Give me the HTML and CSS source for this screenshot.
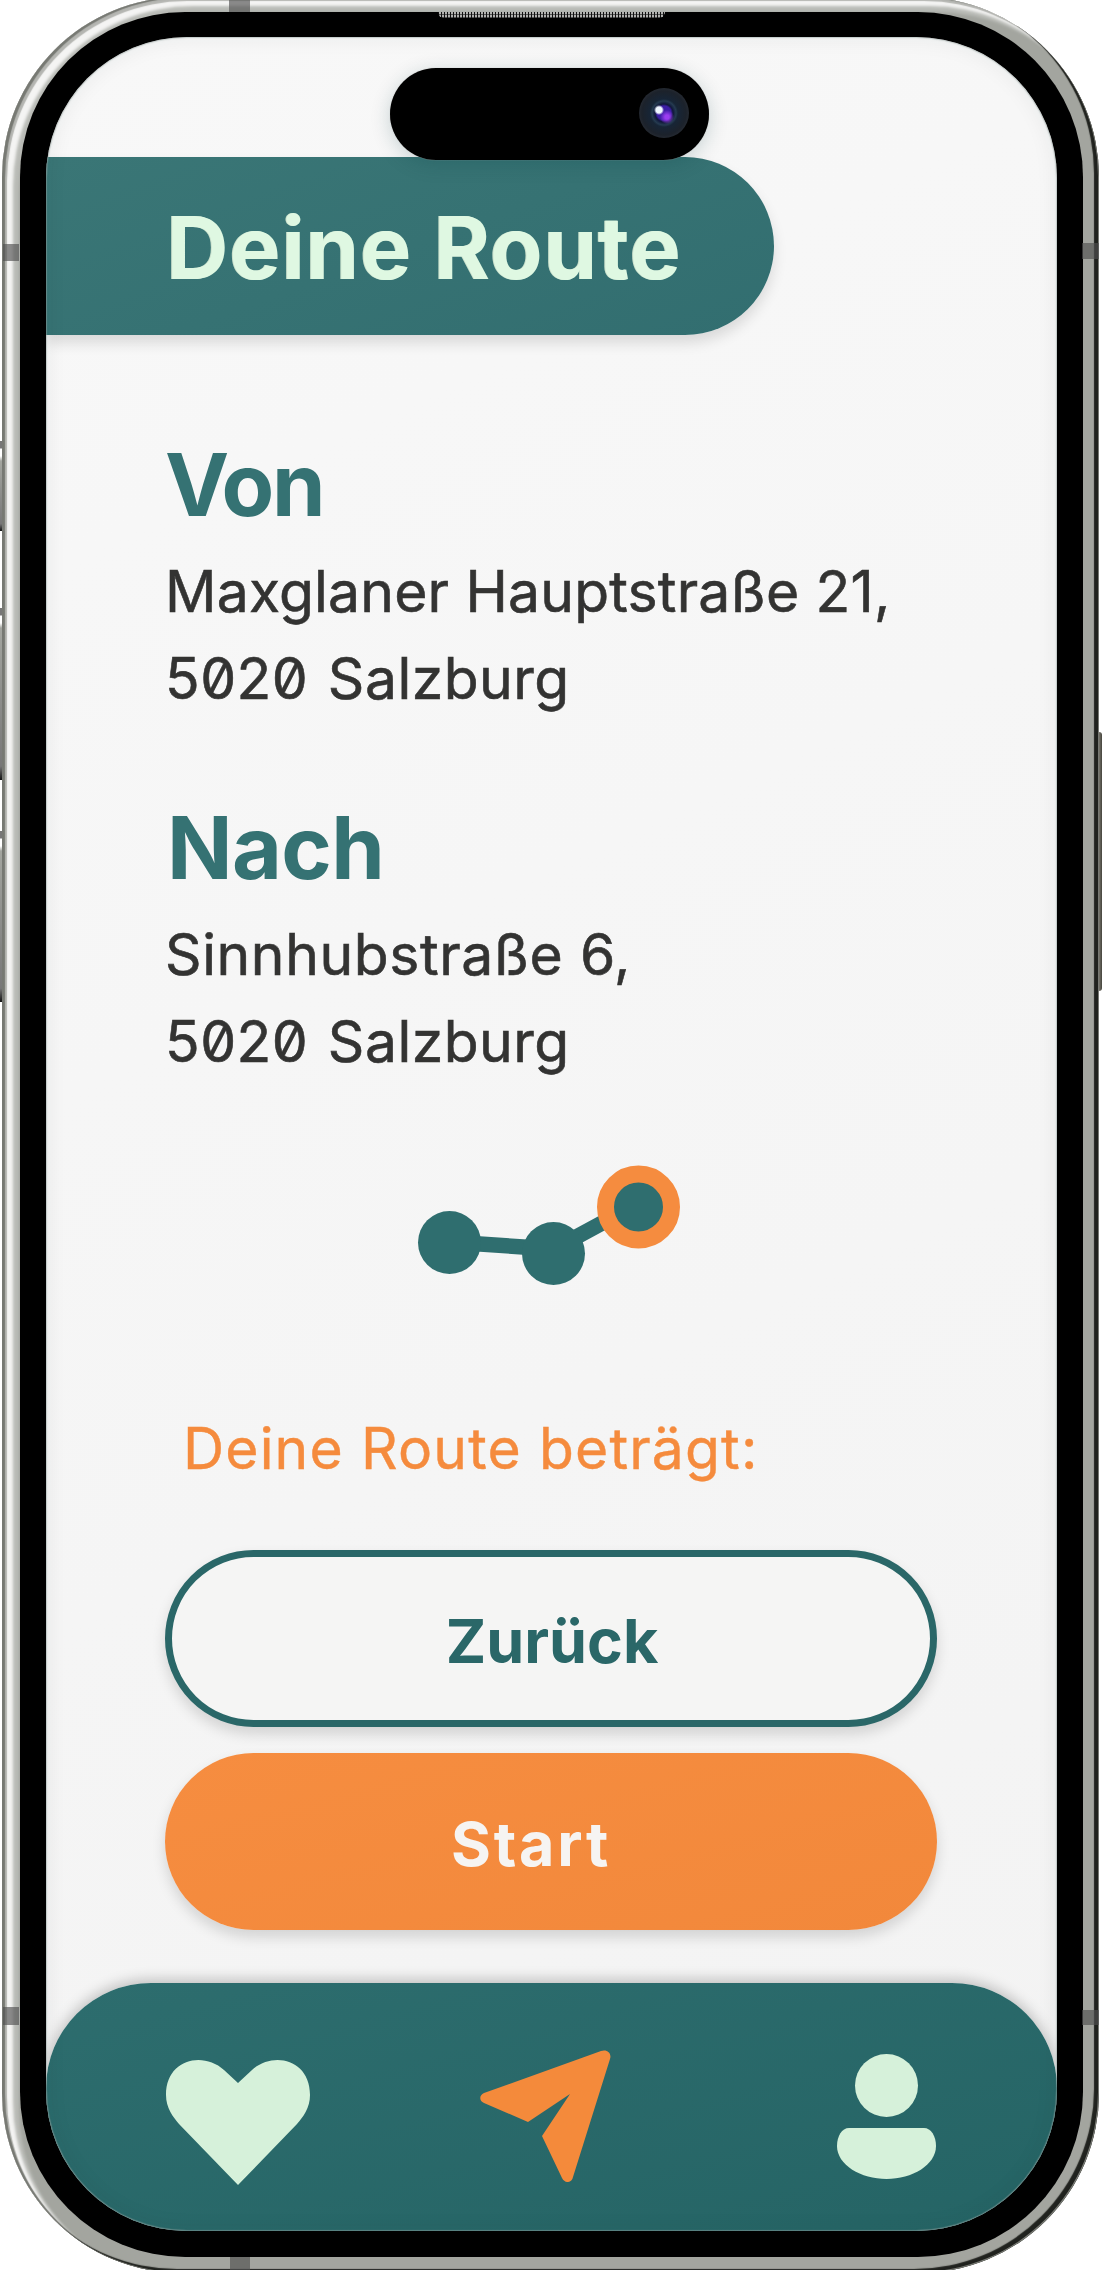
FILE: index.html
```html
<!DOCTYPE html>
<html lang="de">
<head>
<meta charset="utf-8">
<title>Deine Route</title>
<link rel="stylesheet" href="styles.css">
</head>
<body>
<div class="device">
  <span class="key key-action"></span>
  <span class="key key-up"></span>
  <span class="key key-down"></span>
  <span class="key key-power"></span>
  <div class="frame">
    <div class="bezel">
      <main class="screen">
        <header class="title-bar"><h1>Deine Route</h1></header>
        <div class="content">
          <section class="stop">
            <h2 class="von">Von</h2>
            <p><span class="street-from">Maxglaner Hauptstraße 21,</span><br><span class="city">5020 Salzburg</span></p>
          </section>
          <section class="stop">
            <h2 class="nach">Nach</h2>
            <p><span class="street-to">Sinnhubstraße 6,</span><br><span class="city">5020 Salzburg</span></p>
          </section>
          <svg class="route" viewBox="0 0 264 122" aria-hidden="true">
            <path d="M32 77 136 84 221 38" fill="none" stroke="#2f6e6f" stroke-width="15.500"/>
            <circle cx="31.500" cy="77.500" r="31.500" fill="#2f6e6f"/>
            <circle cx="135.500" cy="88.500" r="31.500" fill="#2f6e6f"/>
            <circle cx="220.500" cy="42" r="33" fill="#2f6e6f" stroke="#f58c3f" stroke-width="17"/>
          </svg>
          <p class="length">Deine Route beträgt:</p>
          <div class="actions">
            <button class="btn btn-outline"><span>Zurück</span></button>
            <button class="btn btn-solid"><span>Start</span></button>
          </div>
        </div>
        <nav class="tabs">
          <svg class="icon-heart" viewBox="0 0 144 126"><path d="M72 24 58 11C37-8 0 0 0 36c0 13 7 22 13 29l59 61 59-61c6-7 13-16 13-29 0-36-37-44-58-25Z" fill="#d6f1da"/></svg>
          <svg class="icon-send" viewBox="0 0 131 132"><path d="M121 1c6-2 11 2 9 8L93 127c-1 6-8 7-11 1L62 86 90 44 48 72 4 53c-5-2-5-8 0-10Z" fill="#f48a3b"/></svg>
          <svg class="icon-user" viewBox="0 0 99 125"><circle cx="49.500" cy="31.500" r="31.500" fill="#d6f1da"/><path d="M12 74h75c7 0 12 8 12 18 0 19-24 33-49.500 33S0 111 0 92c0-10 5-18 12-18Z" fill="#d6f1da"/></svg>
        </nav>
        <div class="glass"></div>
        <div class="island"><span class="camera"></span></div>
      </main>
      <span class="speaker"></span>
    </div>
    <span class="band band-top"></span>
    <span class="band band-bottom"></span>
    <span class="band band-left-top"></span>
    <span class="band band-right-top"></span>
    <span class="band band-left-bottom"></span>
    <span class="band band-right-bottom"></span>
  </div>
</div>
</body>
</html>
```
FILE: styles.css
```css
* { box-sizing: border-box; }
body { margin: 0; background: #fff; font-family: Inter, "Noto Sans", sans-serif; }
h1, h2, p { margin: 0; }
.device { position: relative; width: 1102px; height: 2270px; overflow: hidden; }

/* Metal frame and bezel */
.frame {
  position: relative;
  width: 1097px;
  height: 2276px;
  margin: -3px 0 0 2px;
  padding: 15px 16.500px 16px 17.500px;
  border-radius: 180px;
  background: #a3a59f;
  box-shadow:
    inset -1px -1px 0 #777973,
    inset -5px -4px 1px #20221e,
    inset 3px 1px 1px #777973,
    inset 5px 4px 1px #b5b6b2,
    inset 11px 9px 3px #f4f4f3,
    inset 17px 15px 3px #b9bbb6;
}
.bezel {
  position: relative;
  height: 2245px;
  padding: 25px 25.500px 26px 26px;
  border-radius: 165px;
  background: #000;
}
.screen {
  position: relative;
  display: flex;
  flex-direction: column;
  height: 2194px;
  border-radius: 141px;
  overflow: hidden;
  background: linear-gradient(155deg, #f8f8f8, #f3f3f3);
}
.glass {
  position: absolute;
  inset: 0;
  border-radius: 141px;
  box-shadow: inset 0 0 1px 1px rgba(150, 165, 162, .5), inset 0 0 22px rgba(0, 45, 45, .07);
  pointer-events: none;
}
.speaker {
  position: absolute;
  top: 0;
  left: 418px;
  width: 227px;
  height: 6px;
  border-radius: 0 0 10px 10px;
  background: repeating-linear-gradient(90deg, #111 0 1px, transparent 1px 3px), repeating-linear-gradient(0deg, #555 0 1px, #b2b2b0 1px 3px);
}
.key { position: absolute; left: 0; width: 2px; background: linear-gradient(#777 0 7px, #fff 8px 15px, #a3a59f 20px, #777 92%, #111); }
.key-action { top: 433px; height: 74px; }
.key-action { top: 441px; height: 90px; }
.key-up { top: 608px; height: 172px; }
.key-down { top: 831px; height: 171px; }
.key-power { left: 1098px; top: 732px; width: 4px; height: 259px; border-radius: 0 3px 3px 0; background: linear-gradient(90deg, #89877e, #45443c); }
.band { position: absolute; background: rgba(80, 80, 80, .65); }
.band-top { left: 227px; top: 3px; width: 21px; height: 12px; }
.band-bottom { left: 228px; bottom: 3px; width: 20px; height: 13px; }
.band-left-top { left: 1px; top: 247px; width: 16px; height: 17px; }
.band-right-top { right: 0; top: 246px; width: 17px; height: 16px; }
.band-left-bottom { left: 1px; top: 2010px; width: 16px; height: 18px; }
.band-right-bottom { right: 0; top: 2013px; width: 17px; height: 15px; }
.island {
  position: absolute;
  top: 31px;
  left: 344.500px;
  display: flex;
  align-items: center;
  justify-content: flex-end;
  width: 319px;
  height: 92px;
  padding: 0 20px 2px 0;
  border-radius: 46px;
  background: #000;
  box-shadow: 0 0 1px #aaa, 0 4px 20px rgba(0, 60, 65, .2);
}
.camera {
  width: 50px;
  height: 50px;
  border-radius: 50%;
  background:
    radial-gradient(circle at 20px 22px, #eef6ff 0 3px, transparent 5px),
    radial-gradient(circle at 28px 29px, #9a3df0 0 2px, transparent 7px),
    radial-gradient(circle, #3c1da5 0 7px, #10173a 9px, #253b50 12px, #172536 14px, #1c222b 22px, #242931 25px);
}

/* Page */
.title-bar {
  width: 728px;
  height: 178px;
  margin-top: 120px;
  padding-left: 121px;
  border-radius: 0 89px 89px 0;
  background: linear-gradient(160deg, #3a7676, #326e70);
  box-shadow: 0 8px 14px rgba(0, 0, 0, .12);
}
h1 {
  font-size: 86px;
  font-weight: 700;
  line-height: 182px;
  letter-spacing: .9px;
  color: #dff8e2;
  text-shadow: -1px 0 0 #c9dfcb;
  white-space: nowrap;
}
.content { display: flex; flex-direction: column; padding: 100px 120px 0 119.500px; }
.stop { margin-bottom: 76px; }
h2 { font-size: 86px; font-weight: 700; line-height: 101px; color: #357273; }
.von { letter-spacing: -2.400px; }
.nach { margin-left: 2px; letter-spacing: -.6px; }
.stop p { margin-top: 12px; color: #333332; font-size: 57px; line-height: 87px; font-feature-settings: "zero"; -webkit-text-stroke: .6px; white-space: nowrap; }
.street-from { letter-spacing: .2px; }
.street-to { letter-spacing: .6px; }
.city { letter-spacing: .5px; word-spacing: 3px; }
.route { width: 264px; height: 122px; margin: 4px 0 0 253px; overflow: visible; }
.length { margin: 118px 0 0 18px; color: #f58b3d; font-size: 57px; line-height: 87px; letter-spacing: 1.150px; -webkit-text-stroke: .4px; white-space: nowrap; }
.actions { display: flex; flex-direction: column; gap: 26px; margin-top: 58px; }
.btn {
  height: 177px;
  border: 0;
  border-radius: 89px;
  padding: 5px 0 0;
  font: 700 61px Inter, sans-serif;
  box-shadow: 0 7px 14px rgba(0, 0, 0, .14);
}
.btn-outline { padding-left: 2px; border: 7px solid #2a6768; background: #f5f5f4; color: #2a6768; }
.btn-solid { padding-right: 40px; background: linear-gradient(165deg, #f68d40, #f2883b); color: #f6f4f2; letter-spacing: 2.700px; }
.tabs {
  display: flex;
  align-items: flex-start;
  flex: none;
  height: 248px;
  margin-top: auto;
  padding: 0 120px;
  border-radius: 105px 105px 0 0;
  background: linear-gradient(165deg, #2d6d6e, #256465);
  box-shadow: 0 -3px 14px rgba(0, 0, 0, .23);
}
.icon-heart { width: 144px; height: 126px; margin-top: 76px; }
.icon-send { width: 131px; height: 132px; margin: 67px 0 0 170px; }
.icon-user { width: 99px; height: 125px; margin: 71px 1px 0 auto; }
```
